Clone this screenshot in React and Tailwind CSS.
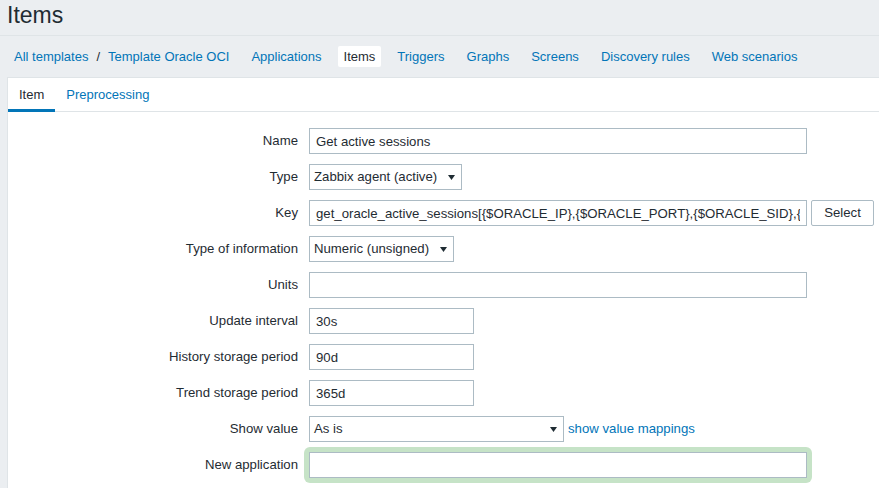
const LINK = 'text-[#0275b8]';

function Arrow() {
  return (
    <svg width="7" height="5" viewBox="0 0 7 5" className="shrink-0">
      <polygon points="0,0 7,0 3.5,5" fill="#1f2c33" />
    </svg>
  );
}

function TextBox({ value = '', width }) {
  return (
    <input
      readOnly
      value={value}
      style={{ width }}
      className="h-[26px] border border-[#acbbc4] bg-white px-[6px] text-[13.2px] text-[#1f2c33] outline-none"
    />
  );
}

function Select({ value, width }) {
  return (
    <div
      style={{ width }}
      className="flex h-[26px] items-center justify-between border border-[#acbbc4] bg-white pl-[4px] pr-[6px] text-[13.2px] text-[#1f2c33]"
    >
      <span className="whitespace-nowrap">{value}</span>
      <Arrow />
    </div>
  );
}

function Row({ label, children }) {
  return (
    <div className="flex h-[26px] items-center gap-[11px]">
      <label className="w-[290px] shrink-0 text-right text-[13.2px] text-[#1f2c33]">{label}</label>
      <div className="flex items-center">{children}</div>
    </div>
  );
}

const NAV = ['Applications', 'Items', 'Triggers', 'Graphs', 'Screens', 'Discovery rules', 'Web scenarios'];

export default function App() {
  return (
    <div className="flex h-[488px] w-[879px] flex-col overflow-hidden bg-[#ebeef1] font-['Liberation_Sans',Arial,sans-serif] text-[#1f2c33]">
      {/* page title */}
      <div className="h-[36px] shrink-0 border-b border-[#dfe4e7] pl-[7px] pt-[4px]">
        <h1 className="text-[23px] leading-none text-[#1f2c33]">Items</h1>
      </div>

      {/* host navigation */}
      <div className="flex h-[41px] shrink-0 items-center gap-[10px] pl-[8px] text-[13px] leading-[21px]">
        <div className="flex items-center">
          <a className={`px-[6px] ${LINK}`}>All templates</a>
          <span className="px-[2px] text-[#1f2c33]">/</span>
          <a className={`px-[6px] ${LINK}`}>Template Oracle OCI</a>
        </div>
        {NAV.map((n) =>
          n === 'Items' ? (
            <span key={n} className="rounded-[2px] bg-white px-[6px] text-[#1f2c33]">
              {n}
            </span>
          ) : (
            <a key={n} className={`whitespace-nowrap px-[6px] ${LINK}`}>
              {n}
            </a>
          )
        )}
      </div>

      {/* form container */}
      <div className="ml-[7px] flex-1 border-l border-t border-[#dfe4e7] bg-white">
        <div className="flex border-b border-[#dfe4e7] text-[13px] leading-[15px]">
          <span className="-mb-px border-b-[3px] border-[#0275b8] px-[11px] pb-[7px] pt-[9px] text-[#1f2c33]">Item</span>
          <a className={`-mb-px border-b-[3px] border-transparent px-[11px] pb-[7px] pt-[9px] ${LINK}`}>Preprocessing</a>
        </div>

        <div className="flex flex-col gap-[10px] pt-[16px]">
          <Row label="Name">
            <TextBox value="Get active sessions" width={498} />
          </Row>
          <Row label="Type">
            <Select value="Zabbix agent (active)" width={153} />
          </Row>
          <Row label="Key">
            <TextBox
              value="get_oracle_active_sessions[{$ORACLE_IP},{$ORACLE_PORT},{$ORACLE_SID},{$ORACLE_USER},{$ORACLE_PASSWORD}]"
              width={498}
            />
            <button className="ml-[4px] h-[26px] w-[63px] rounded-[2px] border border-[#acbbc4] bg-white text-[13.2px] text-[#1f2c33]">
              Select
            </button>
          </Row>
          <Row label="Type of information">
            <Select value="Numeric (unsigned)" width={145} />
          </Row>
          <Row label="Units">
            <TextBox width={498} />
          </Row>
          <Row label="Update interval">
            <TextBox value="30s" width={165} />
          </Row>
          <Row label="History storage period">
            <TextBox value="90d" width={165} />
          </Row>
          <Row label="Trend storage period">
            <TextBox value="365d" width={165} />
          </Row>
          <Row label="Show value">
            <Select value="As is" width={255} />
            <a className={`ml-[4px] text-[13.2px] ${LINK}`}>show value mappings</a>
          </Row>
          <Row label="New application">
            <div className="rounded-[2px] ring-[5px] ring-[#c6e3c7]">
              <TextBox width={498} />
            </div>
          </Row>
        </div>
      </div>
    </div>
  );
}
